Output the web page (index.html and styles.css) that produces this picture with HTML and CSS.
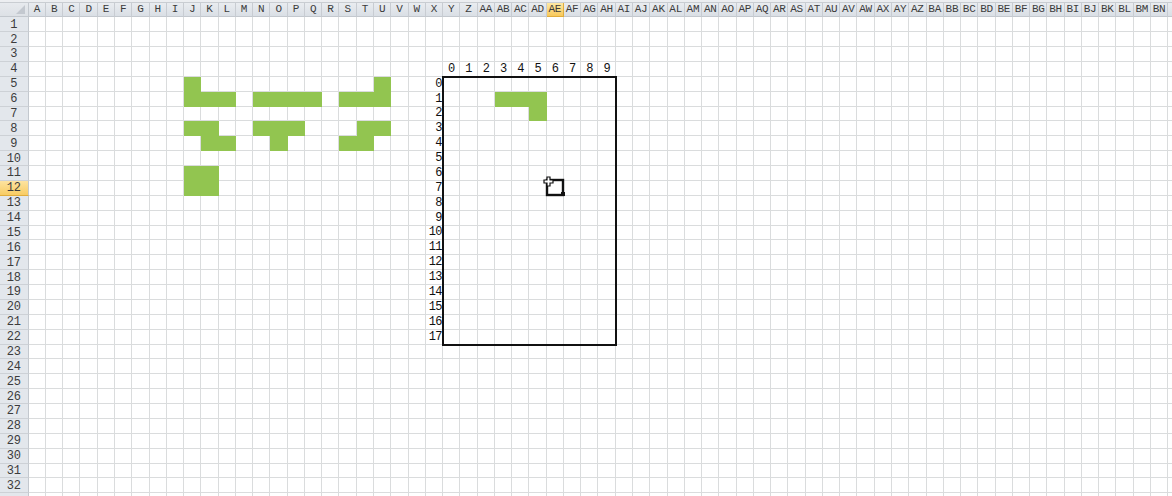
FILE: index.html
```html
<!DOCTYPE html>
<html lang="en">
<head>
<meta charset="utf-8">
<title>Sheet</title>
<link rel="stylesheet" href="styles.css">
</head>
<body>
<div class="topbar"></div>
<div class="sheet">
  <div class="corner"><span class="tri"></span></div>
  <div class="colheads">
    <div>A</div><div>B</div><div>C</div><div>D</div><div>E</div><div>F</div><div>G</div><div>H</div><div>I</div><div>J</div><div>K</div><div>L</div><div>M</div><div>N</div><div>O</div><div>P</div><div>Q</div><div>R</div><div>S</div><div>T</div><div>U</div><div>V</div><div>W</div><div>X</div><div>Y</div><div>Z</div>
    <div>AA</div><div>AB</div><div>AC</div><div>AD</div><div class="sel">AE</div><div>AF</div><div>AG</div><div>AH</div><div>AI</div><div>AJ</div><div>AK</div><div>AL</div><div>AM</div><div>AN</div><div>AO</div><div>AP</div><div>AQ</div><div>AR</div><div>AS</div><div>AT</div><div>AU</div><div>AV</div><div>AW</div><div>AX</div><div>AY</div><div>AZ</div>
    <div>BA</div><div>BB</div><div>BC</div><div>BD</div><div>BE</div><div>BF</div><div>BG</div><div>BH</div><div>BI</div><div>BJ</div><div>BK</div><div>BL</div><div>BM</div><div>BN</div><div></div>
  </div>
  <div class="rowheads">
    <div>1</div><div>2</div><div>3</div><div>4</div><div>5</div><div>6</div><div>7</div><div>8</div><div>9</div><div>10</div><div>11</div><div class="sel">12</div><div>13</div><div>14</div><div>15</div><div>16</div><div>17</div><div>18</div><div>19</div><div>20</div><div>21</div><div>22</div><div>23</div><div>24</div><div>25</div><div>26</div><div>27</div><div>28</div><div>29</div><div>30</div><div>31</div><div>32</div><div></div>
  </div>
  <div class="vlines">
    <i></i><i></i><i></i><i></i><i></i><i></i><i></i><i></i><i></i><i></i><i></i><i></i><i></i><i></i><i></i><i></i><i></i><i></i><i></i><i></i><i></i><i></i><i></i><i></i><i></i><i></i><i></i><i></i><i></i><i></i><i></i><i></i><i></i><i></i><i></i><i></i><i></i><i></i><i></i><i></i><i></i><i></i><i></i><i></i><i></i><i></i><i></i><i></i><i></i><i></i><i></i><i></i><i></i><i></i><i></i><i></i><i></i><i></i><i></i><i></i><i></i><i></i><i></i><i></i><i></i><i></i><i></i>
  </div>
  <div class="hlines">
    <i></i><i></i><i></i><i></i><i></i><i></i><i></i><i></i><i></i><i></i><i></i><i></i><i></i><i></i><i></i><i></i><i></i><i></i><i></i><i></i><i></i><i></i><i></i><i></i><i></i><i></i><i></i><i></i><i></i><i></i><i></i><i></i><i></i>
  </div>

  <div class="piece p1"><b class="g"></b><b></b><b></b><b class="g"></b><b class="g"></b><b class="g"></b></div>
  <div class="piece p2"><b class="g"></b><b class="g"></b><b class="g"></b><b class="g"></b></div>
  <div class="piece p3"><b></b><b></b><b class="g"></b><b class="g"></b><b class="g"></b><b class="g"></b></div>
  <div class="piece p4"><b class="g"></b><b class="g"></b><b></b><b></b><b class="g"></b><b class="g"></b></div>
  <div class="piece p5"><b class="g"></b><b class="g"></b><b class="g"></b><b></b><b class="g"></b><b></b></div>
  <div class="piece p6"><b></b><b class="g"></b><b class="g"></b><b class="g"></b><b class="g"></b><b></b></div>
  <div class="piece p7"><b class="g"></b><b class="g"></b><b class="g"></b><b class="g"></b></div>

  <div class="bcols"><span>0</span><span>1</span><span>2</span><span>3</span><span>4</span><span>5</span><span>6</span><span>7</span><span>8</span><span>9</span></div>
  <div class="brows"><span>0</span><span>1</span><span>2</span><span>3</span><span>4</span><span>5</span><span>6</span><span>7</span><span>8</span><span>9</span><span>10</span><span>11</span><span>12</span><span>13</span><span>14</span><span>15</span><span>16</span><span>17</span></div>
  <div class="piece bp"><b class="g"></b><b class="g"></b><b class="g"></b><b></b><b></b><b class="g"></b></div>
  <div class="board"></div>

  <svg class="cursor" width="30" height="28" viewBox="0 0 30 28" aria-hidden="true">
    <rect x="8" y="8" width="16" height="15" fill="none" stroke="#111" stroke-width="2.4"/>
    <polygon points="8,5 11,5 11,8 14,8 14,11 11,11 11,14 8,14 8,11 5,11 5,8 8,8" fill="#fff" stroke="#111" stroke-width="1.2" stroke-linejoin="miter"/>
    <rect x="22" y="20" width="4" height="4" fill="#111"/>
  </svg>
</div>
</body>
</html>
```
FILE: styles.css
```css
:root {
  --cw: 17.27px;
  --rh: 14.875px;
  --hw: 28.7px;
  --hh: 14.3px;
  --grid: #dadcdd;
  --green: #92c550;
}
* { box-sizing: border-box; }
html, body {
  margin: 0;
  padding: 0;
  background: #fff;
  width: 1172px;
  height: 496px;
  overflow: hidden;
}
.topbar {
  height: 3px;
  background: #eceef1;
  border-bottom: 1px solid #c9cdd2;
}
.sheet {
  position: relative;
  display: grid;
  grid-template-columns: var(--hw) repeat(67, var(--cw));
  grid-template-rows: var(--hh) repeat(33, var(--rh));
  font-family: "Liberation Mono", "DejaVu Sans Mono", monospace;
  font-size: 11px;
  color: #3c3c3c;
}
.corner {
  grid-area: 1 / 1 / 2 / 2;
  background: linear-gradient(#e7eaee, #dde1e6);
  border-right: 1px solid #c3c8ce;
  border-bottom: 1px solid #c3c8ce;
  position: relative;
}
.corner .tri {
  position: absolute;
  right: 3px;
  bottom: 2px;
  width: 0;
  height: 0;
  border-left: 9px solid transparent;
  border-bottom: 9px solid #c3c8cf;
}
.colheads {
  grid-area: 1 / 2 / 2 / -1;
  display: grid;
  grid-template-columns: subgrid;
}
.colheads div {
  background: linear-gradient(#e9ecf0, #dadfe5);
  border-right: 1px solid #c8ccd2;
  border-bottom: 1px solid #c3c8ce;
  display: flex;
  align-items: center;
  justify-content: center;
  white-space: nowrap;
  overflow: hidden;
  line-height: 1;
  letter-spacing: -0.3px;
}
.colheads div.sel {
  background: linear-gradient(#fde7a4, #f8c95c);
  border-right-color: #e0ad3c;
  border-bottom-color: #e0ad3c;
}
.rowheads {
  grid-area: 2 / 1 / -1 / 2;
  display: grid;
  grid-template-rows: subgrid;
}
.rowheads div {
  background: #e3e7ec;
  border-right: 1px solid #c3c8ce;
  border-bottom: 1px solid #cdd1d6;
  display: flex;
  align-items: center;
  justify-content: center;
  font-size: 12px;
  line-height: 1;
  padding-top: 1px;
}
.rowheads div.sel {
  background: linear-gradient(#fde3a0, #f8cc63);
  border-bottom-color: #e0ad3c;
}
.vlines {
  grid-area: 2 / 2 / -1 / -1;
  display: grid;
  grid-template-columns: subgrid;
}
.vlines i { border-right: 1px solid var(--grid); }
.hlines {
  grid-area: 2 / 2 / -1 / -1;
  display: grid;
  grid-template-rows: subgrid;
}
.hlines i { border-bottom: 1px solid var(--grid); }

.piece {
  display: grid;
  grid-template-columns: subgrid;
  grid-template-rows: subgrid;
}
.piece .g { background: var(--green); }
.p1 { grid-area: 6 / 11 / 8 / 14; }
.p2 { grid-area: 7 / 15 / 8 / 19; }
.p3 { grid-area: 6 / 20 / 8 / 23; }
.p4 { grid-area: 9 / 11 / 11 / 14; }
.p5 { grid-area: 9 / 15 / 11 / 18; }
.p6 { grid-area: 9 / 20 / 11 / 23; }
.p7 { grid-area: 12 / 11 / 14 / 13; }
.bp { grid-area: 7 / 29 / 9 / 32; }

.bcols {
  grid-area: 5 / 26 / 6 / 36;
  display: grid;
  grid-template-columns: subgrid;
}
.bcols span,
.brows span {
  display: flex;
  align-items: flex-end;
  font-size: 12px;
  line-height: 1;
  padding-bottom: 2px;
  color: #111;
}
.bcols span { justify-content: center; }
.brows {
  grid-area: 6 / 25 / 24 / 26;
  display: grid;
  grid-template-rows: subgrid;
}
.brows span {
  justify-content: flex-end;
  padding-right: 1px;
  letter-spacing: -0.5px;
}
.board {
  grid-area: 6 / 26 / 24 / 36;
  outline: 2px solid #111;
  outline-offset: -1px;
}
.cursor {
  position: absolute;
  left: 539px;
  top: 169px;
}
```
